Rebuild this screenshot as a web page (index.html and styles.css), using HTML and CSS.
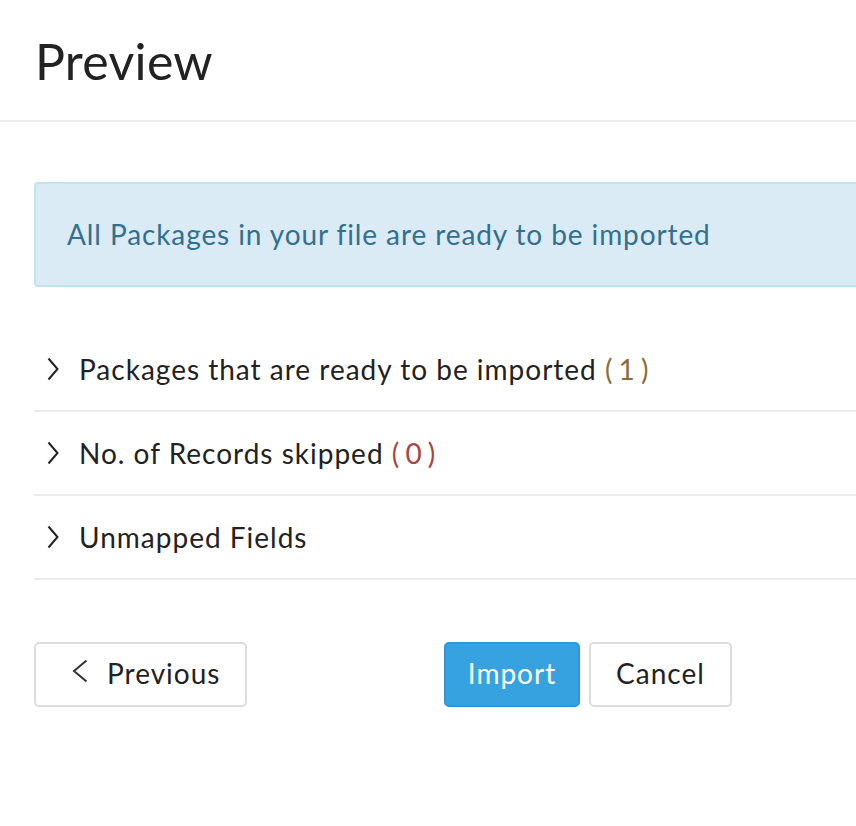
FILE: index.html
```html
<!DOCTYPE html>
<html>
<head>
<meta charset="utf-8">
<link rel="stylesheet" href="styles.css">
</head>
<body>
<div class="header"><h1 class="title">Preview</h1></div>
<div class="content">
  <div class="alert">All Packages in your file are ready to be imported</div>
  <div class="rows">
    <div class="row">
      <svg class="chev" width="12" height="24" viewBox="0 0 12 24"><path d="M1.5 1.5 L10.5 12 L1.5 22.5" fill="none" stroke="#222" stroke-width="2"/></svg>
      <span class="label">Packages that are ready to be imported <span class="count warn">( 1 )</span></span>
    </div>
    <div class="row">
      <svg class="chev" width="12" height="24" viewBox="0 0 12 24"><path d="M1.5 1.5 L10.5 12 L1.5 22.5" fill="none" stroke="#222" stroke-width="2"/></svg>
      <span class="label">No. of Records skipped <span class="count danger">( 0 )</span></span>
    </div>
    <div class="row">
      <svg class="chev" width="12" height="24" viewBox="0 0 12 24"><path d="M1.5 1.5 L10.5 12 L1.5 22.5" fill="none" stroke="#222" stroke-width="2"/></svg>
      <span class="label">Unmapped Fields</span>
    </div>
  </div>
  <div class="actions">
    <button class="btn btn-prev"><svg class="chev-l" width="16" height="24" viewBox="0 0 16 24"><path d="M14.5 1.5 L2 12 L14.5 22.5" fill="none" stroke="#333" stroke-width="2"/></svg><span>Previous</span></button>
    <div class="right-actions">
      <button class="btn btn-primary">Import</button>
      <button class="btn btn-cancel">Cancel</button>
    </div>
  </div>
</div>
</body>
</html>
```
FILE: styles.css
```css
html, body {
  margin: 0;
  padding: 0;
  background: #fff;
  overflow: hidden;
  font-family: "Lato", "Liberation Sans", sans-serif;
  color: #222;
}
.header {
  height: 122px;
  border-bottom: 2px solid #ebebeb;
  padding-left: 35px;
  box-sizing: border-box;
  display: flex;
  align-items: center;
}
.title {
  margin: 0;
  font-weight: 400;
  font-size: 50px;
  color: #222;
  letter-spacing: 0.3px;
  padding-top: 2px;
}
.content {
  padding-left: 34px;
  width: 1000px;
}
.alert {
  margin-top: 60px;
  height: 105px;
  box-sizing: border-box;
  background: #daebf5;
  border: 2px solid #bde6f0;
  border-radius: 4px;
  color: #31708f;
  font-size: 28px;
  letter-spacing: 0.9px;
  padding-left: 31px;
  padding-bottom: 2px;
  display: flex;
  align-items: center;
}
.rows {
  margin-top: 41px;
}
.row {
  height: 84px;
  box-sizing: border-box;
  border-bottom: 2px solid #ebebeb;
  display: flex;
  align-items: center;
  padding-left: 13px;
  padding-bottom: 1px;
}
.chev {
  flex: none;
  margin-right: 20px;
}
.label {
  font-size: 28px;
  letter-spacing: 1px;
  color: #222;
}
.count { letter-spacing: -0.5px; }
.count.warn { color: #8a6d3b; }
.count.danger { color: #a94442; }
.actions {
  margin-top: 62px;
  display: flex;
  align-items: center;
}
.btn {
  height: 65px;
  box-sizing: border-box;
  border-radius: 5px;
  font-family: inherit;
  font-size: 28px;
  letter-spacing: 1px;
  padding-bottom: 4px;
  cursor: pointer;
}
.btn-prev {
  width: 213px;
  background: #fff;
  border: 2px solid #dcdcdc;
  color: #222;
  display: flex;
  align-items: center;
  padding-left: 36px;
  margin: 0;
}
.chev-l {
  flex: none;
  margin-right: 19px;
  margin-bottom: 4px;
}
.right-actions {
  margin-left: 197px;
  display: flex;
  gap: 9px;
}
.btn-primary {
  width: 136px;
  background: #36a3e0;
  border: 2px solid #2f97d3;
  color: #fff;
  margin: 0;
}
.btn-cancel {
  width: 143px;
  background: #fff;
  border: 2px solid #dcdcdc;
  color: #222;
  margin: 0;
}
```
